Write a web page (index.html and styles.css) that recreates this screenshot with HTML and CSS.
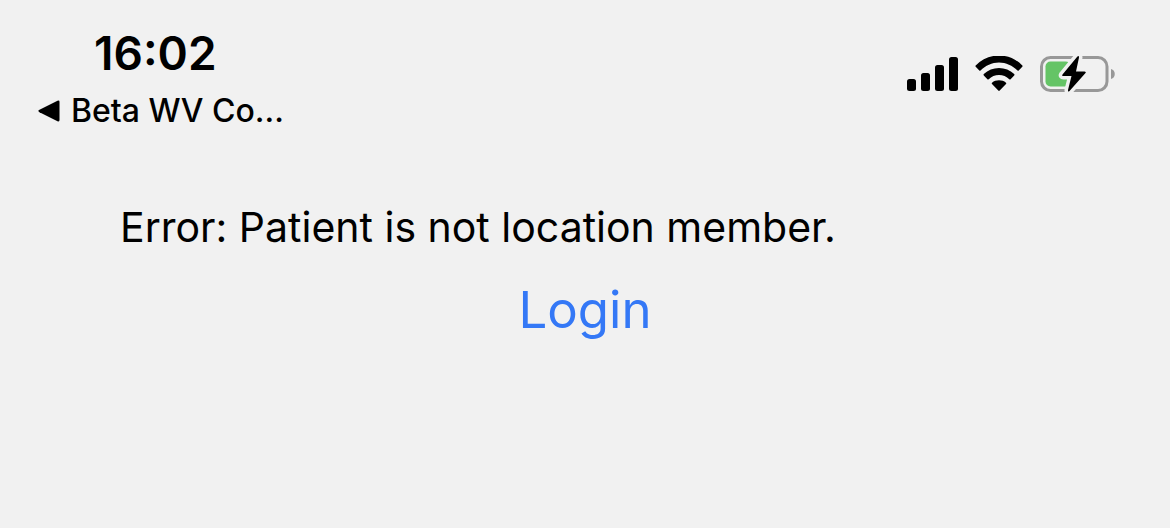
FILE: index.html
```html
<!DOCTYPE html>
<html lang="en">
<head>
    <meta charset="UTF-8">
    <meta name="viewport" content="width=device-width, initial-scale=1.0">
    <title>Login</title>
    <link rel="stylesheet" href="styles.css">
</head>
<body>
    <header class="status-bar">
        <div class="status-left">
            <div class="time">16:02</div>
            <a href="#" class="back-link">
                <svg class="back-arrow" width="22" height="22" viewBox="0 0 22 22" aria-hidden="true">
                    <path d="M1.5 9.8 19.5 .8Q21.5 0 21.5 2V20Q21.5 22 19.5 21.2L1.5 12.2Q-.8 11 1.5 9.8Z"/>
                </svg>
                <span>Beta WV Co...</span>
            </a>
        </div>
        <div class="status-icons">
            <svg width="51" height="36" viewBox="0 0 51 36" aria-hidden="true">
                <rect x="0" y="23" width="9" height="12" rx="2.5"/>
                <rect x="14" y="17" width="9" height="18" rx="2.5"/>
                <rect x="28" y="9" width="9" height="26" rx="2.5"/>
                <rect x="42" y="1" width="9" height="34" rx="2.5"/>
            </svg>
            <svg width="48" height="36" viewBox="0 0 48 36" aria-hidden="true">
                <path d="M24 6.500C31 6.500 37.500 9.500 42.500 14.500Q43.100 15.100 43.700 14.500L47.300 10.800Q48 10.100 47.300 9.400C41 3 33 -.5 24 -.5S7 3 .7 9.400Q0 10.100 .7 10.800L4.300 14.500Q4.900 15.100 5.500 14.500C10.500 9.500 17 6.500 24 6.500Z"/>
                <path d="M24 19C28 19 31.500 20.600 34.300 23.200Q35 23.800 35.600 23.200L39.200 19.500Q39.900 18.800 39.200 18.100C35 14.100 29.800 12 24 12S13 14.100 8.800 18.100Q8.100 18.800 8.800 19.500L12.400 23.200Q13 23.800 13.700 23.200C16.500 20.600 20 19 24 19Z"/>
                <path d="M31 28Q31.700 27.300 31 26.700C29 25 26.600 24.300 24 24.300S19 25 17 26.700Q16.300 27.300 17 28L23.300 34.600Q24 35.300 24.700 34.600Z"/>
            </svg>
            <svg width="76" height="40" viewBox="0 0 76 40" aria-hidden="true">
                <rect class="battery-case" x="1.500" y="3.500" width="65.500" height="33" rx="9"/>
                <path class="battery-cap" d="M71 15C76 16 76 24 71 25Z"/>
                <rect class="battery-level" x="5.500" y="7.500" width="25" height="25" rx="5"/>
                <path class="battery-bolt" d="M37 3 22.500 20.500Q21.500 22 23.500 22H31.500L28 36Q27.800 38.500 29.500 37L45.500 19Q46.500 17.500 44.500 17.500H36L39 3.500Q39 1 37 3Z"/>
            </svg>
        </div>
    </header>

    <main class="content">
        <p class="error-message">Error: Patient is not location member.</p>
        <button type="button" class="login-btn">Login</button>
    </main>
</body>
</html>
```

FILE: styles.css
```css
* {
    margin: 0;
    padding: 0;
    box-sizing: border-box;
}

body {
    font-family: Inter, "Liberation Sans", sans-serif;
    background: #f1f1f1;
    color: #000;
    min-height: 100vh;
}

.status-bar {
    display: flex;
    justify-content: space-between;
    align-items: flex-start;
    padding: 24px 54px 0 38px;
}

.time {
    padding-left: 56px;
    font-size: 46px;
    line-height: 58px;
    font-weight: 600;
}

.back-link {
    display: flex;
    align-items: center;
    gap: 11px;
    color: inherit;
    font-size: 32px;
    line-height: 58px;
    font-weight: 500;
    text-decoration: none;
}

.status-icons {
    display: flex;
    align-items: center;
    gap: 17px;
    padding-top: 30px;
}

.battery-case {
    fill: none;
    stroke: #989898;
    stroke-width: 3;
}

.battery-cap {
    fill: #989898;
}

.battery-level {
    fill: #65c466;
}

.battery-bolt {
    stroke: #f1f1f1;
    stroke-width: 7;
    paint-order: stroke;
}

.content {
    display: flex;
    flex-direction: column;
    padding: 58px 120px;
}

.error-message {
    font-size: 41px;
    line-height: 58px;
}

.login-btn {
    align-self: center;
    margin-top: 18px;
    background: none;
    border: none;
    color: #3478f6;
    font-family: inherit;
    font-size: 51px;
    line-height: 72px;
    cursor: pointer;
}
```
